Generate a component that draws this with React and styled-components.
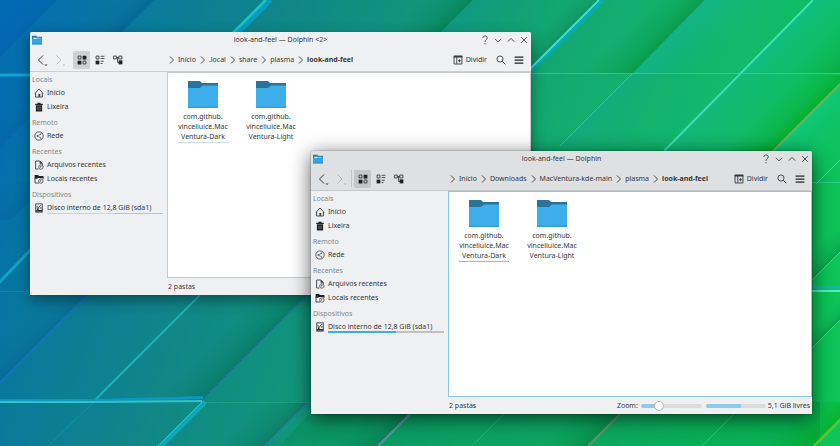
import React, { useId, useState } from "react";
import styled, { createGlobalStyle, css } from "styled-components";

const INK = "#34383b";
const BLUE = "#3daee9";

const GlobalStyle = createGlobalStyle`
  * { box-sizing: border-box; }
  html, body { margin: 0; padding: 0; overflow: hidden; }
  body, button, input {
    font-family: "Noto Sans", "Open Sans", sans-serif;
    font-size: 7px;
    line-height: 10px;
    color: ${INK};
  }
  a { color: inherit; text-decoration: none; }
  ul, ol, h1, h2 { margin: 0; padding: 0; list-style: none; font: inherit; }
  button { border: 0; padding: 0; margin: 0; background: none; }
  svg { display: block; flex: none; }
`;

const Desktop = styled.main`
  position: relative;
  min-height: 100vh;
  overflow: hidden;
  background: #0c8a86;
`;

const Wallpaper = styled.svg`
  position: absolute;
  inset: 0;
  width: 100%;
  height: 100%;
`;

const WindowFrame = styled.section`
  position: absolute;
  width: calc(100vw - 339px);
  min-height: calc(100vh - 183px);
  display: flex;
  flex-direction: column;
  background: #eff0f1;
  border-radius: 2px 2px 0 0;
  ${(p) =>
    p.$active
      ? css`
          right: 28px;
          bottom: 32px;
          box-shadow: 0 4px 20px rgba(0, 0, 0, 0.65), 0 0 2px rgba(0, 0, 0, 0.4);
        `
      : css`
          left: 30px;
          top: 32px;
          box-shadow: 0 5px 14px rgba(0, 0, 0, 0.42);
        `}
`;

const Header = styled.header`
  background: ${(p) => (p.$active ? "#dee0e2" : "#eff0f1")};
  border-bottom: 1px solid ${(p) => (p.$active ? "#c3c8cb" : "#cdcfd1")};
  border-radius: 2px 2px 0 0;
`;

const TitleBar = styled.div`
  display: grid;
  grid-template-columns: 1fr auto 1fr;
  align-items: center;
  height: 16px;
  padding: 0 2px;
`;

const WindowButtons = styled.div`
  display: flex;
  justify-content: flex-end;
  gap: 3px;
`;

const WindowButton = styled.button`
  display: grid;
  place-items: center;
  width: 10px;
  height: 10px;
`;

const ToolBar = styled.div`
  display: flex;
  align-items: center;
  height: 23px;
  padding: 0 7px 0 4px;
`;

const NavButton = styled.button`
  width: 17px;
  height: 16px;
  display: grid;
  place-items: center;
  margin-right: 1px;
  opacity: ${(p) => (p.disabled ? 0.25 : 1)};
`;

const Divider = styled.span`
  width: 1px;
  height: 17px;
  margin-right: 2px;
  background: ${(p) => (p.$active ? "#c2c5c7" : "transparent")};
`;

const ViewButton = styled.button`
  width: 17px;
  height: 18px;
  margin-right: 1px;
  display: grid;
  place-items: center;
  border-radius: 2px;
  background: ${(p) => (p["aria-pressed"] ? (p.$active ? "#c4c6c8" : "#cfd1d2") : "none")};
`;

const Crumbs = styled.ol`
  display: flex;
  flex: 1;
  padding-left: 41px;
  white-space: nowrap;
`;

const Crumb = styled.li`
  display: flex;
  align-items: center;
  gap: 2px;
  margin-right: 3px;
  font-weight: ${(p) => (p.$current ? 700 : 400)};
`;

const SplitButton = styled.button`
  display: flex;
  align-items: center;
  gap: 3px;
  margin-right: 9px;
`;

const IconButton = styled.button`
  width: 10px;
  height: 16px;
  display: grid;
  place-items: center;
  & + & { margin-left: 8px; }
`;

const Body = styled.div`
  flex: 1;
  display: grid;
  grid-template-columns: 137px 1fr;
`;

const Places = styled.nav`
  display: flex;
  flex-direction: column;
  gap: 2px;
  padding: 1px 4px 0 2px;
`;

const PlacesTitle = styled.h2`
  height: 13px;
  line-height: 13px;
  color: #85898c;
`;

const PlaceRow = styled.li`
  height: 14px;
`;

const PlaceLink = styled.a`
  display: grid;
  grid-template-columns: 10px 1fr;
  gap: 3px;
  align-items: center;
  height: 14px;
  padding-left: 2px;
`;

const DiskUsage = styled.span`
  display: block;
  height: 11px;
  line-height: 9px;
  background: linear-gradient(
        90deg,
        ${(p) => (p.$active ? BLUE : "#b4d9ee")} 59%,
        #bfc2c4 59%
      )
      bottom / 100% ${(p) => (p.$active ? 2 : 1)}px no-repeat;
`;

const Content = styled.div`
  display: flex;
  flex-direction: column;
`;

const FileView = styled.ul`
  flex: 1;
  display: flex;
  align-items: flex-start;
  gap: 18px;
  padding: 8px 10px;
  background: #fff;
  border: 1px solid ${(p) => (p.$active ? "#8cc8e6" : "#c6c9cb")};
`;

const FileLink = styled.a`
  display: flex;
  flex-direction: column;
  align-items: center;
  width: 50px;
  gap: 4px;
  text-align: center;
`;

const FileName = styled.span`
  width: 100%;
  white-space: pre-line;
  border-bottom: 1px solid ${(p) => p.$line};
`;

const StatusBar = styled.footer`
  display: flex;
  align-items: center;
  height: 17px;
  padding: 0 2px 0 1px;
  white-space: nowrap;
`;

const ZoomLabel = styled.label`
  margin-left: auto;
  margin-right: 3px;
`;

const ZoomSlider = styled.input`
  appearance: none;
  width: 61px;
  height: 10px;
  margin: 0 4px 0 0;
  background: transparent;
  &::-webkit-slider-runnable-track {
    height: 4px;
    border-radius: 2px;
    background: linear-gradient(90deg, #8ecaea 28%, #dadcdd 28%);
  }
  &::-webkit-slider-thumb {
    appearance: none;
    width: 10px;
    height: 10px;
    margin-top: -3px;
    border-radius: 50%;
    background: #fdfdfd;
    border: 1px solid #b5b8ba;
  }
`;

const SpaceBar = styled.progress`
  appearance: none;
  width: 60px;
  height: 4px;
  margin-right: 2px;
  border: 0;
  &::-webkit-progress-bar { background: #dadcdd; border-radius: 2px; }
  &::-webkit-progress-value { background: #8ecaea; border-radius: 2px 0 0 2px; }
`;

/* ---------- icons ---------- */

const Icon = ({ size = 10, children, stroke = INK, width = 1.4 }) => (
  <svg width={size} height={size} viewBox="0 0 16 16" fill="none" stroke={stroke} strokeWidth={width} aria-hidden="true">
    {children}
  </svg>
);

const Clock = () => (
  <>
    <circle cx="11" cy="11.2" r="3.6" fill="#eff0f1" strokeWidth="1.1" />
    <path d="M11 9v2.4H9.2" strokeWidth="1.1" />
  </>
);

const placeIcons = {
  home: (
    <Icon>
      <path d="M1.400 8.800 8 1.600l6.600 7.200M2.600 8v6.400h10.800V8" />
      <path d="M7 9.500h3V14H7z" fill={INK} stroke="none" />
    </Icon>
  ),
  trash: (
    <Icon>
      <path d="M5.600 1h4.800v1.600H14v2H2v-2h3.600zM3 5h10v10H3z" fill="#1f2326" stroke="none" />
      <path d="M6.300 7.400v5.200M9.700 7.400v5.200" stroke="#80858a" width="1" />
    </Icon>
  ),
  network: (
    <Icon width={1.2}>
      <circle cx="8" cy="8" r="6.700" />
      <path d="M10.600 4.900 5.400 8l5.200 3.100" strokeWidth="0.9" />
      <circle cx="10.600" cy="4.900" r=".9" fill={INK} stroke="none" />
      <circle cx="5.200" cy="8" r="1.200" fill={INK} stroke="none" />
      <circle cx="10.600" cy="11.100" r=".9" fill={INK} stroke="none" />
    </Icon>
  ),
  files: (
    <Icon>
      <path d="M7 14.400H2.600V1.600h6.600l4 4V8" />
      <path d="M9 1v5h4.800z" fill={INK} stroke="none" />
      <Clock />
    </Icon>
  ),
  folders: (
    <Icon>
      <path d="M1 1.400h5.400L8 3.200h7v3H6.400L5 7.600H1z" fill="#1f2326" stroke="none" />
      <path d="M1.600 6v8.400H8M14.400 5v3" />
      <Clock />
    </Icon>
  ),
  disk: (
    <Icon>
      <rect x="2.800" y="1.400" width="10.400" height="13.200" />
      <path d="M10.600 3.600 6 9.400M5 4.600v3.200M11 6.400v3" />
      <path d="M3 11.200h10V14H3z" fill={INK} stroke="none" />
      <circle cx="6" cy="10" r="1.500" fill={INK} stroke="none" />
    </Icon>
  ),
};

const Folder = () => (
  <svg width="30" height="27" viewBox="0 0 30 27" aria-hidden="true">
    <path d="M0 0h12l2 2h16v7H0z" fill="#2a7499" />
    <path d="M0 7h12l3-2.600h15V27H0z" fill={BLUE} />
    <path d="M0 26.300h30" stroke="#3596cb" strokeWidth="1" />
  </svg>
);

const AppIcon = () => (
  <svg width="10" height="10" viewBox="0 0 16 16" aria-hidden="true">
    <path d="M0 1h7l1.200 1.600H16V8H0z" fill="#2678b0" />
    <path d="M2 4.400h12V8H2z" fill="#d7ecf7" />
    <path d="M0 6.400h6.400L8 5h8v10H0z" fill="#37a4e2" />
    <path d="M0 13.400h16V15H0z" fill="#2f8dcb" />
  </svg>
);

const BackForward = ({ forward }) => (
  <svg width="13" height="14" viewBox="0 0 13 14" fill="none" stroke={INK} aria-hidden="true">
    <path d={forward ? "M2.500 2.500 7 7l-4.500 4.500" : "M7 2.500 2.500 7 7 11.500"} />
    <path d="M8.500 11.500h3L10 13z" fill={INK} stroke="none" />
  </svg>
);

const viewIcons = [
  <Icon key="i">
    <path d="M1.700 1.700h4.600v4.600H1.700zM9.700 9.700h4.600v4.600H9.700z" />
    <path d="M9 1h6v6H9zM1 9h6v6H1z" fill="#1f2326" stroke="none" />
  </Icon>,
  <Icon key="c">
    <path d="M1.700 1.700h4.600v4.600H1.700z" />
    <path d="M1 9h6v6H1z" fill="#1f2326" stroke="none" />
    <path d="M9 2h6M9 5.600h6M9 10h5M9 13.600h3" />
  </Icon>,
  <Icon key="t">
    <path d="M.7 1.700h4.600v4.600H.7zM9.200 1.700h5v4.600h-5zM5.300 4h4M7.300 4v8h2" />
    <path d="M9 8.600h6V15H9z" fill="#1f2326" stroke="none" />
  </Icon>,
];

const CrumbArrow = () => (
  <svg width="8" height="10" viewBox="0 0 8 10" fill="none" stroke={INK} strokeWidth=".9" aria-hidden="true">
    <path d="m2 1.500 3.500 3.500L2 8.500" />
  </svg>
);

const SplitIcon = () => (
  <Icon>
    <path d="M1.700 2h12.600v12.400H1.700zM6 2v12" />
    <path d="M1 1h14v3H1z" fill={INK} stroke="none" />
    <path d="M8 9.200h5M10.500 6.700v5" />
  </Icon>
);

const SearchIcon = () => (
  <Icon>
    <circle cx="6.400" cy="6.400" r="4.900" />
    <path d="m10 10 5 5" />
  </Icon>
);

const MenuIcon = () => (
  <Icon width={2}>
    <path d="M1 3.200h14M1 8h14M1 12.800h14" stroke="#1f2326" />
  </Icon>
);

const frameIcons = [
  ["Ajuda", "M4.500 4.800C4.500 2.600 6 1.500 8 1.500s3.600 1.200 3.600 3.200C11.600 7.500 8 7.400 8 11M8 13v2"],
  ["Minimizar", "m3 6 5 5 5-5"],
  ["Maximizar", "m3 10.500 5-5 5 5"],
  ["Fechar", "m3.500 3.500 9 9M12.500 3.500l-9 9"],
];

/* ---------- wallpaper ---------- */

function Fold({ from, to, shade = 50, dark = "#00402e", alpha = 0.25, glow, line, width = 1, lineAlpha = 0.75 }) {
  const id = useId();
  const [x1, y1] = from;
  const [x2, y2] = to;
  const side = (w, key, color, opacity) => (
    <g key={key}>
      <linearGradient id={id + key} gradientUnits="userSpaceOnUse" x1={x1} y1={y1} x2={x1 + w / 2} y2={y1 + w / 2}>
        <stop offset="0" stopColor={color} stopOpacity={opacity} />
        <stop offset="0.4" stopColor={color} stopOpacity={opacity * 0.4} />
        <stop offset="1" stopColor={color} stopOpacity="0" />
      </linearGradient>
      <path d={`M${x1} ${y1}L${x2} ${y2}h${w}L${x1 + w} ${y1}z`} fill={`url(#${id + key})`} />
    </g>
  );
  return (
    <g>
      {shade > 0 && side(-shade, "d", dark, alpha)}
      {glow && side(70, "g", glow, 0.4)}
      {line && <path d={`M${x1} ${y1}L${x2} ${y2}`} stroke={line} strokeWidth={width} opacity={lineAlpha} />}
    </g>
  );
}

const folds = [
  { from: [57, 0], to: [-16, 73], dark: "#0054a8", glow: "#0a76a4" },
  { from: [154, 0], to: [81, 73], dark: "#005490", alpha: 0.4, glow: "#0a7ca0" },
  { from: [266, 0], to: [193, 73], shade: 0, line: "#25d8d4", width: 3 },
  { from: [271, 0], to: [198, 73], shade: 0, line: "#04a6d8", width: 4 },
  { from: [473, 0], to: [400, 73], dark: "#00703c", alpha: 0.5, glow: "#109a90" },
  { from: [602, 0], to: [531, 70], shade: 30, line: "#03acd0", width: 5, lineAlpha: 0.7 },
  { from: [599, 0], to: [530, 69], shade: 0, line: "#55f3dc", width: 2 },
  { from: [705, 0], to: [633, 73], dark: "#009030", alpha: 0.6, glow: "#12b4b0", line: "#36a080" },
  { from: [813, 0], to: [741, 73], shade: 0, glow: "#12bcac", line: "#4cf0c8", width: 2 },
  { from: [913, 0], to: [840, 73], dark: "#009820", alpha: 0.5 },
  { from: [633, 73], to: [560, 146], shade: 0, glow: "#12a890", line: "#38dcb4" },
  { from: [741, 73], to: [664, 151], shade: 0, glow: "#12b890", line: "#48eccc", width: 2 },
  { from: [849, 75], to: [742, 182], dark: "#00a818", alpha: 0.7, glow: "#10d49c", line: "#78b866", width: 2 },
  { from: [860, 140], to: [816, 184], shade: 0, line: "#48eccc" },
  { from: [860, 232], to: [804, 288], shade: 30, line: "#48e8b4" },
  { from: [860, 300], to: [804, 356], shade: 20, line: "#48e8b4" },
  { from: [74, 73], to: [-35, 182], dark: "#005890", line: "#0c66b4" },
  { from: [48, 182], to: [10, 220], dark: "#005490", line: "#0a64b8" },
  { from: [44, 236], to: [-10, 292], shade: 0, line: "#12b4d4", width: 3 },
  { from: [88, 295], to: [-3, 386], dark: "#005a94", alpha: 0.35, line: "#1f70c0", width: 2 },
  { from: [200, 295], to: [94, 401], shade: 0, line: "#1cc4c4", width: 2 },
  { from: [308, 295], to: [202, 401], dark: "#006850", alpha: 0.5, line: "#237fa8", width: 2 },
  { from: [94, 402], to: [48, 446], shade: 0, line: "#1aa8a8", lineAlpha: 0.5 },
  { from: [205, 402], to: [161, 446], shade: 0, line: "#08b4cc", width: 5 },
  { from: [202, 402], to: [158, 446], shade: 0, line: "#34d8c0" },
  { from: [309, 402], to: [265, 446], line: "#2b80b0", width: 2 },
  { from: [422, 402], to: [378, 446], line: "#6f9cb4", width: 2 },
  { from: [516, 402], to: [472, 446], shade: 0, line: "#28bc80" },
  { from: [632, 402], to: [588, 446], dark: "#006828", alpha: 0.4, line: "#7a9470", width: 2 },
  { from: [746, 402], to: [702, 446], shade: 0, line: "#28d890" },
  { from: [858, 402], to: [814, 446], dark: "#00a000", alpha: 0.5, line: "#70c838", width: 3 },
];

const DesktopWallpaper = () => (
  <Wallpaper viewBox="0 0 840 446" preserveAspectRatio="xMidYMid slice" fill="none" aria-hidden="true">
    <linearGradient id="base" gradientUnits="userSpaceOnUse" x1="0" y1="60" x2="800" y2="330">
      <stop offset="0" stopColor="#026ab4" />
      <stop offset="0.12" stopColor="#08789e" />
      <stop offset="0.3" stopColor="#108688" />
      <stop offset="0.48" stopColor="#109878" />
      <stop offset="0.66" stopColor="#12ac70" />
      <stop offset="0.82" stopColor="#12b86c" />
      <stop offset="1" stopColor="#0cc458" />
    </linearGradient>
    <path d="M0 0h840v446H0z" fill="url(#base)" />
    <path d="M320 402h500v44H280z" fill="#008c48" opacity=".35" />
    {folds.map((f, i) => (
      <Fold key={i} {...f} />
    ))}
    <path d="M0 75h30" stroke="#0fa6d0" strokeWidth="3" />
    <path d="M530 73.500h310M812 182.500h28" stroke="#3cd09c" opacity=".7" />
    <path d="M0 291.500h30" stroke="#1690b0" opacity=".5" />
    <path d="M812 287h28" stroke="#10b8a0" strokeWidth="3" />
    <path d="M812 291h28" stroke="#54ecc0" strokeWidth="2" />
    <path d="M0 399h94l109-3v3l-109 3H0z" fill="#0a98c0" />
    <path d="M0 402h94l108-1" stroke="#30c4c8" strokeWidth="2" />
    <path d="M202 402.500h110" stroke="#2cb48c" opacity=".5" />
  </Wallpaper>
);

/* ---------- Dolphin window ---------- */

const places = [
  ["Locais", [["home", "Início"], ["trash", "Lixeira"]]],
  ["Remoto", [["network", "Rede"]]],
  ["Recentes", [["files", "Arquivos recentes"], ["folders", "Locais recentes"]]],
  ["Dispositivos", [["disk", "Disco interno de 12,8 GiB (sda1)"]]],
];

const files = ["Dark", "Light"];
const viewModes = ["Ícones", "Compacto", "Detalhes"];

function DolphinWindow({ title, path, active }) {
  const [mode, setMode] = useState(0);
  const zoomId = useId();
  return (
    <WindowFrame $active={active} aria-label={title}>
      <Header $active={active}>
        <TitleBar>
          <AppIcon />
          <h1>{title}</h1>
          <WindowButtons>
            {frameIcons.map(([label, d]) => (
              <WindowButton key={label} aria-label={label}>
                <Icon><path d={d} /></Icon>
              </WindowButton>
            ))}
          </WindowButtons>
        </TitleBar>
        <ToolBar>
          <NavButton aria-label="Voltar"><BackForward /></NavButton>
          <NavButton aria-label="Avançar" disabled><BackForward forward /></NavButton>
          <Divider $active={active} />
          {viewModes.map((label, i) => (
            <ViewButton key={label} $active={active} aria-label={label} aria-pressed={mode === i} onClick={() => setMode(i)}>
              {viewIcons[i]}
            </ViewButton>
          ))}
          <Crumbs>
            {path.map((part, i) => (
              <Crumb key={part} $current={i === path.length - 1}>
                <CrumbArrow />
                <a href="#folder">{part}</a>
              </Crumb>
            ))}
          </Crumbs>
          <SplitButton><SplitIcon />Dividir</SplitButton>
          <IconButton aria-label="Pesquisar"><SearchIcon /></IconButton>
          <IconButton aria-label="Menu"><MenuIcon /></IconButton>
        </ToolBar>
      </Header>
      <Body>
        <Places aria-label="Locais">
          {places.map(([group, rows]) => (
            <div key={group}>
              <PlacesTitle>{group}</PlacesTitle>
              <ul>
                {rows.map(([icon, label]) => (
                  <PlaceRow key={label}>
                    <PlaceLink href="#place">
                      {placeIcons[icon]}
                      {icon === "disk" ? <DiskUsage $active={active}>{label}</DiskUsage> : <span>{label}</span>}
                    </PlaceLink>
                  </PlaceRow>
                ))}
              </ul>
            </div>
          ))}
        </Places>
        <Content>
          <FileView $active={active}>
            {files.map((name, i) => (
              <li key={name}>
                <FileLink href="#file">
                  <Folder />
                  <FileName $line={i > 0 ? "transparent" : active ? "#7cc4e6" : "#cfe0e6"}>
                    {`com.github.\nvinceliuice.Mac\nVentura-${name}`}
                  </FileName>
                </FileLink>
              </li>
            ))}
          </FileView>
          <StatusBar>
            <span>2 pastas</span>
            {active && (
              <>
                <ZoomLabel htmlFor={zoomId}>Zoom:</ZoomLabel>
                <ZoomSlider id={zoomId} type="range" min="0" max="16" defaultValue="4" />
                <SpaceBar value="59" max="100" aria-label="Espaço usado" />
                <span>5,1 GiB livres</span>
              </>
            )}
          </StatusBar>
        </Content>
      </Body>
    </WindowFrame>
  );
}

export default function App() {
  return (
    <Desktop>
      <GlobalStyle />
      <DesktopWallpaper />
      <DolphinWindow title="look-and-feel — Dolphin <2>" path={["Início", ".local", "share", "plasma", "look-and-feel"]} />
      <DolphinWindow
        active
        title="look-and-feel — Dolphin"
        path={["Início", "Downloads", "MacVentura-kde-main", "plasma", "look-and-feel"]}
      />
    </Desktop>
  );
}
